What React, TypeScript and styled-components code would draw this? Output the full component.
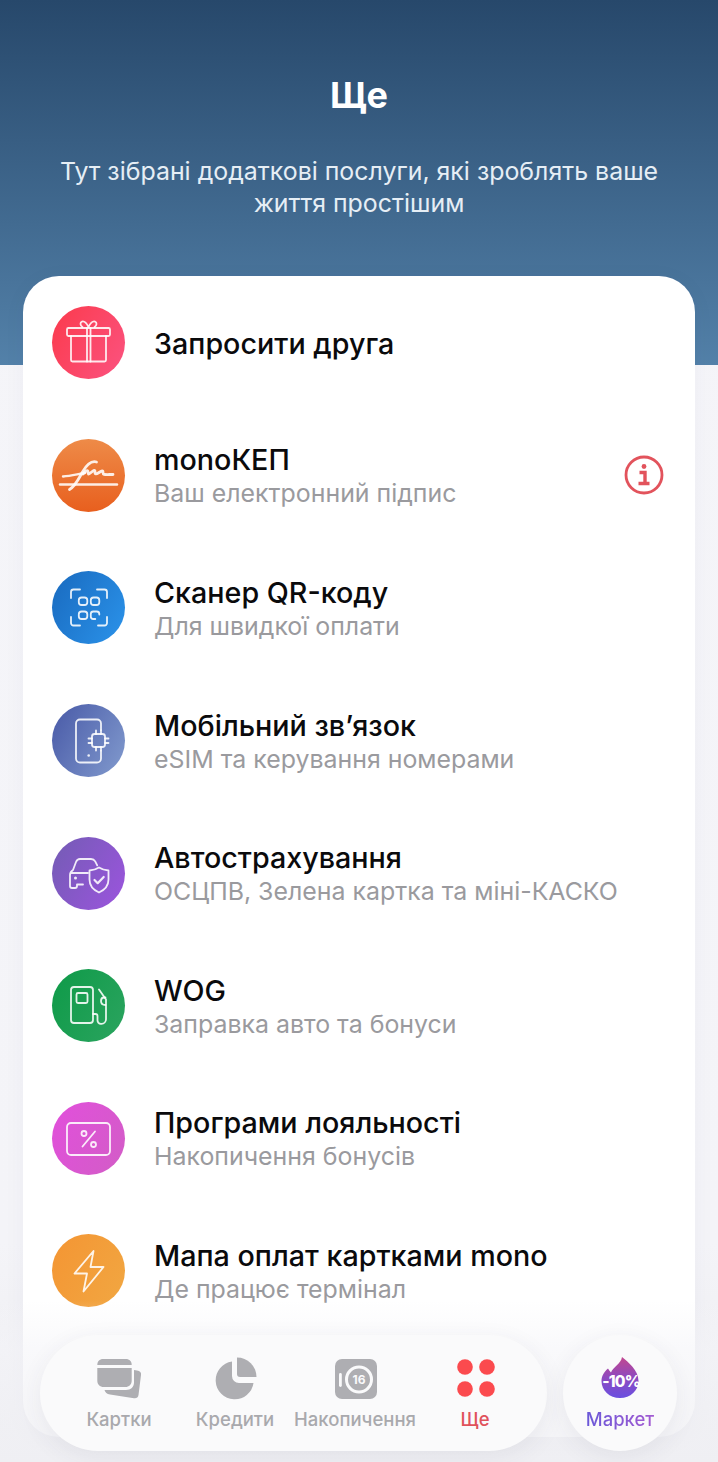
import styled, { createGlobalStyle } from "styled-components";

const GlobalStyle = createGlobalStyle`
  html, body {
    margin: 0;
    padding: 0;
    background: #f4f4f8;
  }
  * {
    box-sizing: border-box;
  }
`;

const GiftIcon = () => (
  <Glyph viewBox="0 0 73 73">
    <rect x="15" y="22" width="43" height="8" rx="1.5" />
    <path d="M19 30v24a1.5 1.5 0 0 0 1.5 1.5h32a1.5 1.5 0 0 0 1.5-1.5V30" />
    <path d="M35 22v33.5M38.5 22v33.5" />
    <path d="M36.5 21c-2-4-4.500-6-6.500-5.400-2.200.7-2 4 .5 5.400M36.500 21c2-4 4.500-6 6.500-5.400 2.200.7 2 4-.5 5.400" />
  </Glyph>
);

const SignIcon = () => (
  <Glyph viewBox="0 0 73 73">
    <path d="M8 45.500h57" strokeWidth="2.400" />
    <path d="M11 37.500c8-.5 15-2.500 22-3.500" strokeWidth="2.400" />
    <path d="M44.500 23c-5-1.500-10 3-14 10s-7 14-13 17.500" strokeWidth="2.800" />
    <path d="M31 35c2-3 5-4.500 5-2s0 3 3 .5 4-3 4-.5 1 2.500 4 .5 4-2.500 4 0 1 2 10 2" strokeWidth="2.800" />
  </Glyph>
);

const ScanIcon = () => (
  <Glyph viewBox="0 0 73 73">
    <path d="M19 27v-6a2.500 2.500 0 0 1 2.500-2.500H28M45 18.500h7.500A2.500 2.500 0 0 1 55 21v6M55 46v6a2.500 2.500 0 0 1-2.500 2.500H46M28 54.500h-6.500A2.500 2.500 0 0 1 19 52v-6" />
    <rect x="26.800" y="26.500" width="8.500" height="7.500" rx="2.800" />
    <rect x="38.800" y="26.500" width="8.500" height="7.500" rx="2.800" />
    <rect x="26.800" y="40.500" width="8.500" height="7.500" rx="2.800" />
    <path d="M47.300 43.500v-.500a2.500 2.500 0 0 0-2.500-2.500h-3.500a2.500 2.500 0 0 0-2.500 2.500v2.500a2.500 2.500 0 0 0 2.500 2.500h2" />
  </Glyph>
);

const SimIcon = () => (
  <Glyph viewBox="0 0 73 73">
    <path d="M49 26v-6.500a4 4 0 0 0-4-4H28a4 4 0 0 0-4 4v35a4 4 0 0 0 4 4h17a4 4 0 0 0 4-4V47" />
    <rect x="40" y="30" width="13" height="13" rx="2.500" />
    <path d="M44 26.500V30M49 26.500V30M44 43v3.500M49 43v3.500M36.500 34.500H40M36.500 39H40M53 34.500h3.500M53 39h3.500" />
    <circle className="solid" cx="36.700" cy="51.500" r="1.300" />
  </Glyph>
);

const CarIcon = () => (
  <Glyph viewBox="0 0 73 73">
    <path d="M36 36H19.500M31 47.500H25V49a2 2 0 0 1-2 2h-3a2 2 0 0 1-2-2V38c0-2.500 1.500-4 3-5l3-8c.7-1.800 2-3 4-3h11c2 0 3.300.8 4.200 2.400l2 4" />
    <circle cx="23.500" cy="41" r="1.500" className="solid" />
    <path d="M47 30.500c3 2 6 2.800 9.500 3v9c0 6.500-4 10.500-9.500 13-5.500-2.500-9.500-6.500-9.500-13v-9c3.500-.2 6.500-1 9.500-3z" />
    <path d="M42.500 43l3.200 3.200 6-6.200" strokeWidth="2.200" />
  </Glyph>
);

const FuelIcon = () => (
  <Glyph viewBox="0 0 73 73">
    <rect x="19" y="18" width="22" height="36" rx="3" />
    <rect x="24.500" y="24" width="11" height="10" rx="1.500" />
    <path d="M41 45h2.500a2 2 0 0 1 2 2v4.500a3.300 3.300 0 0 0 3.300 3.300h.700a4.500 4.500 0 0 0 4.500-4.500V30.500L47 20.500" />
    <path d="M53.500 28.500h-1.500c-2 0-3 1.500-3 3.500s1 4 4.500 4" />
  </Glyph>
);

const LoyaltyIcon = () => (
  <Glyph viewBox="0 0 73 73">
    <rect x="15" y="21" width="43" height="32" rx="4" />
    <path d="M43 29.500 30.500 44.500" />
    <circle cx="32" cy="31.500" r="2.500" />
    <circle cx="41.500" cy="42.500" r="2.500" />
  </Glyph>
);

const BoltIcon = () => (
  <Glyph viewBox="0 0 73 73">
    <path d="M41.500 17 22.500 39.500h12.500L31.500 57.500 51.500 33H38.500z" strokeLinejoin="round" />
  </Glyph>
);

const items = [
  { title: "Запросити друга", from: "#fb3a4c", to: "#fb5380", Icon: GiftIcon },
  { title: "monoКЕП", sub: "Ваш електронний підпис", from: "#ee8b48", to: "#e85f1e", angle: 180, Icon: SignIcon, info: true },
  { title: "Сканер QR-коду", sub: "Для швидкої оплати", from: "#196abf", to: "#2b93ea", Icon: ScanIcon },
  { title: "Мобільний зв’язок", sub: "eSIM та керування номерами", from: "#4859a7", to: "#829bce", Icon: SimIcon },
  { title: "Автострахування", sub: "ОСЦПВ, Зелена картка та міні-КАСКО", from: "#735cb4", to: "#9c54de", Icon: CarIcon },
  { title: "WOG", sub: "Заправка авто та бонуси", from: "#0e9a48", to: "#2ba45f", Icon: FuelIcon },
  { title: "Програми лояльності", sub: "Накопичення бонусів", from: "#e24fdc", to: "#d25dc6", Icon: LoyaltyIcon },
  { title: "Мапа оплат картками mono", sub: "Де працює термінал", from: "#f49533", to: "#f1a742", Icon: BoltIcon },
];

export default function App() {
  return (
    <St.Page>
      <GlobalStyle />
      <St.Header>
        <St.Title>Ще</St.Title>
        <St.Desc>Тут зібрані додаткові послуги, які зроблять ваше життя простішим</St.Desc>
      </St.Header>

      <St.Card>
        {items.map(({ title, sub, from, to, angle, Icon, info }) => (
          <St.Row key={title}>
            <St.Badge $from={from} $to={to} $angle={angle ?? 120}>
              <Icon />
            </St.Badge>
            <St.RowText>
              <St.RowTitle>{title}</St.RowTitle>
              {sub && <St.RowSub>{sub}</St.RowSub>}
            </St.RowText>
            {info && (
              <St.Info viewBox="0 0 40 40">
                <circle cx="20" cy="20" r="18" fill="none" stroke="#e2535c" strokeWidth="2.800" />
                <circle cx="20" cy="11.500" r="2.400" fill="#e2535c" />
                <path d="M15.500 17.500h5.500v10.500M14.500 28.500h11" fill="none" stroke="#e2535c" strokeWidth="3.400" />
              </St.Info>
            )}
          </St.Row>
        ))}
      </St.Card>

      <St.Fade />

      <St.TabBar>
        <St.Pill>
          <St.Tab>
            <St.TabIcon viewBox="0 0 46 44">
              <path d="M38 14l3 .6c3 .5 4.500 2 4 4.500l-2.500 20c-.4 2.500-2 3.500-4.500 3.200l-24-3.800c-3-.5-5-2.300-5.500-4.500H30c5 0 8-3 8-7.500z" fill="#aeaeb2" />
              <path d="M1.300 9c0-3.500 2-6 6-6h22.400c4 0 6 2.500 6 6z" fill="#aeaeb2" />
              <path d="M1.300 12h34.400v12.500c0 4-2.500 6.500-6.500 6.500H7.800c-4 0-6.500-2.500-6.500-6.500z" fill="#aeaeb2" />
            </St.TabIcon>
            <St.TabLabel>Картки</St.TabLabel>
          </St.Tab>
          <St.Tab>
            <St.TabIcon viewBox="0 0 46 44">
              <path d="M20 5.500a19 19 0 1 0 21.500 21.500H27a7 7 0 0 1-7-7z" fill="#aeaeb2" />
              <path d="M25 1.500a19.500 19.500 0 0 1 19.500 19.500H28a3 3 0 0 1-3-3z" fill="#aeaeb2" />
            </St.TabIcon>
            <St.TabLabel>Кредити</St.TabLabel>
          </St.Tab>
          <St.Tab>
            <St.TabIcon viewBox="0 0 46 44">
              <rect x="3" y="3" width="42" height="40" rx="7" fill="#aeaeb2" />
              <rect x="7" y="17" width="2.800" height="14" rx="1.400" fill="#fafafb" />
              <circle cx="27" cy="23.500" r="12.500" fill="none" stroke="#fafafb" strokeWidth="3" />
              <text x="27" y="28" textAnchor="middle" fontSize="12" fontWeight="700" fontFamily="Inter, sans-serif" fill="#fafafb">16</text>
            </St.TabIcon>
            <St.TabLabel>Накопичення</St.TabLabel>
          </St.Tab>
          <St.Tab>
            <St.TabIcon viewBox="0 0 46 44">
              <circle cx="13" cy="11" r="7.800" fill="#fb4a4e" />
              <circle cx="35" cy="11" r="7.800" fill="#fb4a4e" />
              <circle cx="13" cy="33" r="7.800" fill="#fb4a4e" />
              <circle cx="35" cy="33" r="7.800" fill="#fb4a4e" />
            </St.TabIcon>
            <St.TabLabel $color="#e0525b">Ще</St.TabLabel>
          </St.Tab>
        </St.Pill>

        <St.MarketTab>
          <St.TabIcon viewBox="0 0 46 44">
            <defs>
              <linearGradient id="flame" x1="0" y1="0" x2="0" y2="1">
                <stop offset="0" stopColor="#c2478f" />
                <stop offset="0.5" stopColor="#8e4abf" />
                <stop offset="1" stopColor="#6a4fe0" />
              </linearGradient>
            </defs>
            <path d="M25 1c6 5 16.500 13 16.500 24 0 9.500-8 17-18.500 17S4.500 34.500 4.500 25c0-5 2.500-9 6.500-12.500 1 1.500 2 3 3 4 2-5.500 10-8.500 11-15.500z" fill="url(#flame)" />
            <text x="24" y="31" textAnchor="middle" fontSize="15.500" fontWeight="800" letterSpacing="-0.8" fontFamily="Inter, sans-serif" fill="#ffffff">-10%</text>
          </St.TabIcon>
          <St.MarketLabel>Маркет</St.MarketLabel>
        </St.MarketTab>
      </St.TabBar>
    </St.Page>
  );
}

const font = `Inter, "Noto Sans", "Liberation Sans", sans-serif`;

const Glyph = styled.svg`
  width: 73px;
  height: 73px;
  fill: none;
  stroke: rgba(255, 255, 255, 0.88);
  stroke-width: 1.800;
  stroke-linecap: round;
  stroke-linejoin: round;

  .solid {
    fill: rgba(255, 255, 255, 0.88);
    stroke: none;
  }
`;

const St = {
  Page: styled.main`
    position: relative;
    width: 718px;
    height: 1462px;
    overflow: hidden;
    background: linear-gradient(180deg, #f5f5f9 0%, #f4f4f8 85%, #ececf0 100%);
    font-family: ${font};
  `,
  Header: styled.header`
    height: 365px;
    padding: 74px 50px 0;
    background: linear-gradient(180deg, #27486b 0%, #5381a9 100%);
    text-align: center;
  `,
  Title: styled.h1`
    margin: 0;
    font-size: 36px;
    line-height: 42px;
    font-weight: 700;
    color: #ffffff;
  `,
  Desc: styled.p`
    margin: 39px 0 0;
    font-size: 24.900px;
    line-height: 32px;
    font-weight: 400;
    color: #e6eef5;
  `,
  Card: styled.section`
    position: relative;
    height: 1161px;
    margin: -89px 23px 0;
    padding-top: 0.500px;
    border-radius: 36px;
    background: #ffffff;
    box-shadow: 0 4px 24px rgba(60, 60, 90, 0.04);
  `,
  Row: styled.article`
    display: flex;
    align-items: center;
    height: 132.600px;
    padding: 0 31px 0 29px;
  `,
  Badge: styled.div<{ $from: string; $to: string; $angle: number }>`
    flex: none;
    width: 73px;
    height: 73px;
    border-radius: 50%;
    background: linear-gradient(${({ $angle }) => $angle}deg, ${({ $from }) => $from}, ${({ $to }) => $to});
  `,
  RowText: styled.div`
    flex: 1;
    display: flex;
    flex-direction: column;
    margin-left: 29px;
    padding-top: 2px;
  `,
  RowTitle: styled.div`
    font-size: 28.700px;
    line-height: 34px;
    font-weight: 500;
    color: #0a0a0c;
  `,
  RowSub: styled.div`
    font-size: 24.900px;
    line-height: 32px;
    font-weight: 400;
    color: #9a9a9e;
  `,
  Info: styled.svg`
    flex: none;
    width: 40px;
    height: 40px;
  `,
  Fade: styled.div`
    position: absolute;
    left: 0;
    right: 0;
    top: 1300px;
    height: 162px;
    background: linear-gradient(180deg, rgba(244, 244, 248, 0) 0%, rgba(244, 244, 248, 0.55) 30%, rgba(240, 240, 244, 0.75) 100%);
  `,
  TabBar: styled.nav`
    position: absolute;
    left: 40px;
    bottom: 11px;
    display: flex;
    gap: 16px;
  `,
  Pill: styled.div`
    display: grid;
    grid-template-columns: 116px 116px 124px 116px;
    width: 507px;
    height: 116px;
    padding-left: 21px;
    border-radius: 58px;
    background: #fafafb;
    box-shadow: 0 6px 24px rgba(60, 60, 90, 0.07);
  `,
  Tab: styled.div`
    display: flex;
    flex-direction: column;
    align-items: center;
    min-width: 0;
    padding-top: 21px;
  `,
  TabIcon: styled.svg`
    width: 46px;
    height: 44px;
  `,
  TabLabel: styled.span<{ $color?: string }>`
    margin-top: 8px;
    font-size: 18.500px;
    line-height: 22px;
    font-weight: 500;
    white-space: nowrap;
    color: ${({ $color }) => $color ?? "#a9a9ad"};
  `,
  MarketTab: styled.div`
    display: flex;
    flex-direction: column;
    align-items: center;
    width: 114px;
    height: 116px;
    padding-top: 21px;
    border-radius: 50%;
    background: #fafafb;
    box-shadow: 0 6px 24px rgba(60, 60, 90, 0.07);
  `,
  MarketLabel: styled.span`
    margin-top: 8px;
    font-size: 18.500px;
    line-height: 22px;
    font-weight: 500;
    white-space: nowrap;
    background: linear-gradient(90deg, #6a58d8, #a35bd2);
    -webkit-background-clip: text;
    background-clip: text;
    color: transparent;
  `,
};
